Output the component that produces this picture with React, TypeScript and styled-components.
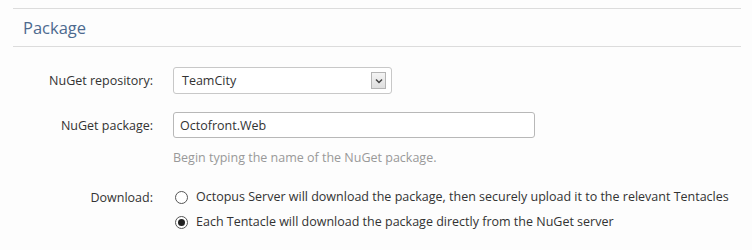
import { FunctionComponent } from 'react'
import styled, { createGlobalStyle } from 'styled-components'

const GlobalStyle = createGlobalStyle`
  html, body {
    margin: 0;
    padding: 0;
    background: #fdfdfd;
  }
  body {
    font-family: 'Open Sans', 'Noto Sans', sans-serif;
    font-size: 12.5px;
    color: #333;
  }
`

const Section = styled.section`
  margin: 8px 11px 0 13px;
`

const Header = styled.h2`
  margin: 0;
  padding: 0 10px;
  height: 37px;
  display: flex;
  align-items: center;
  border-top: 1px solid #dcdcdc;
  border-bottom: 1px solid #dcdcdc;
  font-size: 16.5px;
  font-weight: normal;
  color: #4d6a8f;
`

const Form = styled.div`
  display: grid;
  grid-template-columns: 140px 1fr;
  column-gap: 20px;
  padding-top: 20px;
`

const Label = styled.label<{ top?: number }>`
  text-align: right;
  padding-top: ${({ top }) => top ?? 6}px;
  line-height: 16px;
`

const Field = styled.div<{ gap?: number }>`
  margin-bottom: ${({ gap }) => gap ?? 18}px;
`

const Select = styled.div`
  width: 219px;
  height: 27px;
  box-sizing: border-box;
  border: 1px solid #c8c8c8;
  border-radius: 3px;
  background: #fff;
  display: flex;
  align-items: center;
  justify-content: space-between;
  padding: 0 5px 0 8px;
`

const Arrow = styled.span`
  width: 15px;
  height: 17px;
  box-sizing: border-box;
  border: 1px solid #b4b4b4;
  background: linear-gradient(#f4f4f4, #dedede);
  display: flex;
  align-items: center;
  justify-content: center;
`

const Input = styled.div`
  width: 362px;
  height: 26px;
  box-sizing: border-box;
  border: 1px solid #b8b8b8;
  border-radius: 3px;
  background: #fff;
  display: flex;
  align-items: center;
  padding: 0 6px;
`

const Help = styled.div`
  color: #999;
  margin-top: 12px;
  line-height: 16px;
`

const Options = styled.div`
  display: flex;
  flex-direction: column;
  gap: 9px;
`

const Option = styled.label`
  display: flex;
  align-items: center;
  gap: 8px;
  line-height: 16px;
  padding-left: 2px;
`

const Radio = styled.span<{ checked?: boolean }>`
  width: 13px;
  height: 13px;
  box-sizing: border-box;
  border-radius: 50%;
  border: 1px solid #555;
  background: #fff;
  display: flex;
  align-items: center;
  justify-content: center;

  &::after {
    content: '';
    width: 7px;
    height: 7px;
    border-radius: 50%;
    background: ${({ checked }) => (checked ? '#222' : 'transparent')};
  }
`

const App: FunctionComponent = () => {
  return (
    <>
      <GlobalStyle />
      <Section>
        <Header>Package</Header>
        <Form>
          <Label>NuGet repository:</Label>
          <Field>
            <Select>
              TeamCity
              <Arrow>
                <svg width="8" height="6" viewBox="0 0 8 6">
                  <path d="M1 1.5 L4 4.5 L7 1.5" fill="none" stroke="#444" strokeWidth="1.5" />
                </svg>
              </Arrow>
            </Select>
          </Field>

          <Label top={6}>NuGet package:</Label>
          <Field gap={23}>
            <Input>Octofront.Web</Input>
            <Help>Begin typing the name of the NuGet package.</Help>
          </Field>

          <Label top={1}>Download:</Label>
          <Options>
            <Option>
              <Radio />
              Octopus Server will download the package, then securely upload it to the relevant Tentacles
            </Option>
            <Option>
              <Radio checked />
              Each Tentacle will download the package directly from the NuGet server
            </Option>
          </Options>
        </Form>
      </Section>
    </>
  )
}

export default App
